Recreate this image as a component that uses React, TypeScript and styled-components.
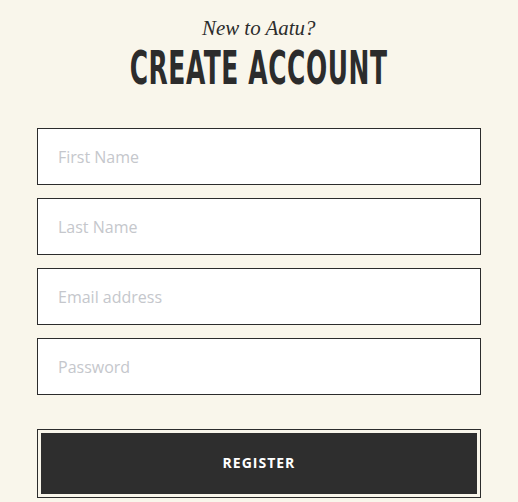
import React from 'react';
import styled, { createGlobalStyle } from 'styled-components';

const GlobalStyle = createGlobalStyle`
  html, body {
    margin: 0;
    padding: 0;
    background: #f9f6eb;
  }
  * { box-sizing: border-box; }
`;

const Page = styled.div`
  width: 518px;
  min-height: 502px;
  background: #f9f6eb;
  padding: 14px 37px 0 37px;
`;

const Header = styled.div`
  display: flex;
  flex-direction: column;
  align-items: center;
`;

const Intro = styled.p`
  margin: 0;
  font-family: "Liberation Serif", "DejaVu Serif", serif;
  font-style: italic;
  font-size: 22px;
  line-height: 28px;
  color: #2c2c2c;
  transform: scaleX(0.95);
`;

const Title = styled.h1`
  margin: 1px 0 0 0;
  font-family: "DejaVu Sans Condensed", "DejaVu Sans", sans-serif;
  font-weight: bold;
  font-size: 47px;
  line-height: 50px;
  letter-spacing: 1px;
  color: #2c2c2c;
  transform: scaleX(0.59);
`;

const Form = styled.form`
  display: flex;
  flex-direction: column;
  gap: 13px;
  margin-top: 35px;
`;

const Input = styled.input`
  width: 444px;
  height: 57px;
  border: 1px solid #2c2c2c;
  background: #fff;
  padding: 0 20px;
  font-family: "Open Sans", sans-serif;
  font-size: 16px;
  color: #2c2c2c;
  outline: none;

  &::placeholder {
    color: #c5c7cc;
  }
`;

const ButtonFrame = styled.div`
  margin-top: 34px;
  width: 444px;
  border: 1px solid #2c2c2c;
  padding: 3px;
`;

const Button = styled.button`
  width: 100%;
  height: 61px;
  border: none;
  padding: 0 0 3px 0;
  background: #2e2e2e;
  color: #fff;
  font-family: "Open Sans", sans-serif;
  font-weight: 700;
  font-size: 14px;
  letter-spacing: 1px;
  cursor: pointer;
`;

export default function App() {
  return (
    <>
      <GlobalStyle />
      <Page>
        <Header>
          <Intro>New to Aatu?</Intro>
          <Title>CREATE ACCOUNT</Title>
        </Header>
        <Form onSubmit={(e) => e.preventDefault()}>
          <Input placeholder="First Name" />
          <Input placeholder="Last Name" />
          <Input placeholder="Email address" />
          <Input type="password" placeholder="Password" />
        </Form>
        <ButtonFrame>
          <Button>REGISTER</Button>
        </ButtonFrame>
      </Page>
    </>
  );
}
